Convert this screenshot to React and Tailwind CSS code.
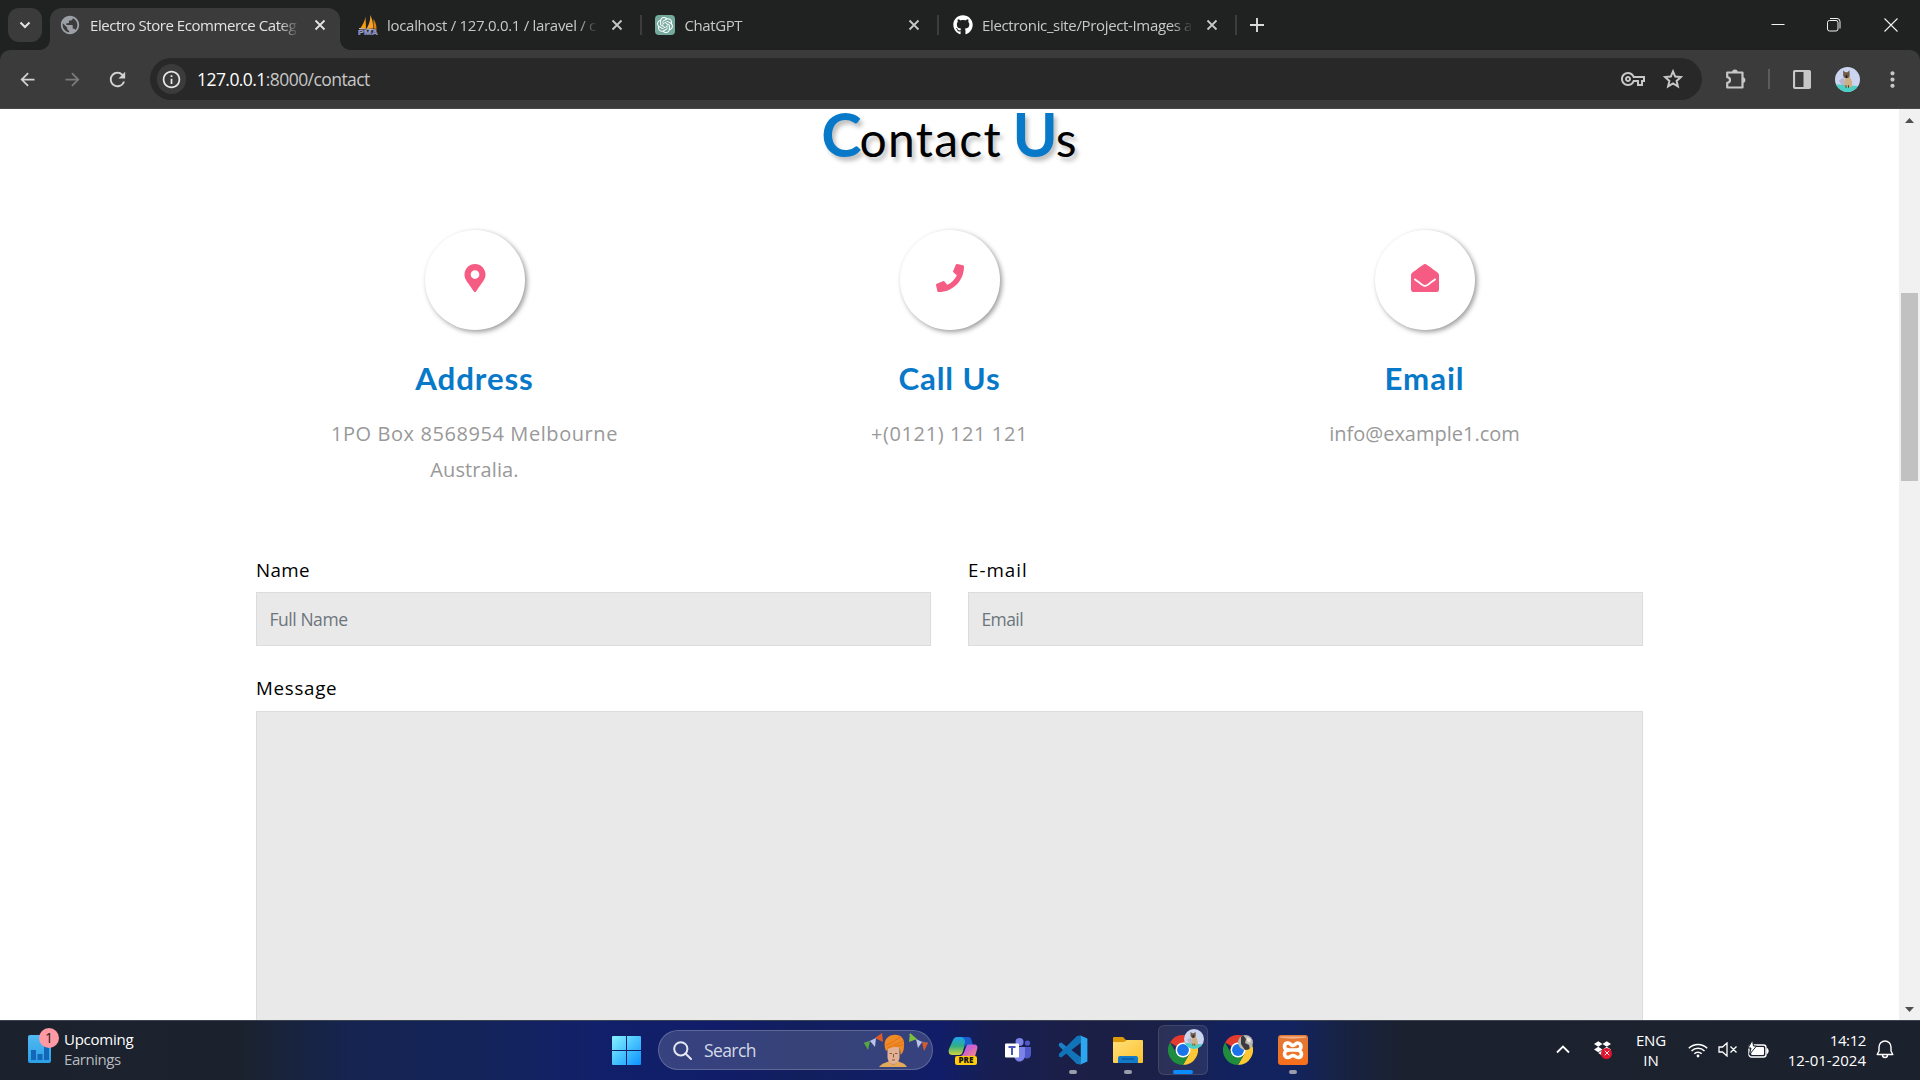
import { FaMapMarkerAlt, FaPhone, FaEnvelopeOpen, FaGithub, FaDropbox } from "react-icons/fa";
import { MdArrowBack, MdArrowForward, MdRefresh, MdInfoOutline, MdOutlineVpnKey, MdMoreVert, MdPublic } from "react-icons/md";
import { SiOpenai } from "react-icons/si";

const segoe = "font-['Open_Sans','Noto_Sans',sans-serif]";
const lato = "font-['Lato',sans-serif]";

function Cross({ className = "" }) {
  return (
    <svg viewBox="0 0 12 12" className={"h-3 w-3 " + className} fill="none" stroke="currentColor" strokeWidth="1.8">
      <path d="M1.5 1.5l9 9M10.5 1.5l-9 9" />
    </svg>
  );
}

function SailLogo() {
  return (
    <svg viewBox="0 0 20 20" className="h-5 w-5">
      <path d="M7.5 1.5C7 6 4 11 1.500 14.500L8 13.500z" fill="#f89c0e" />
      <path d="M12 0C13 5 10.500 10 8.500 14L15 13.500C15.500 8 14 3 12 0z" fill="#f7a32b" />
      <path d="M15.500 4C18 8 18.500 11 18.500 14L15.500 13.500z" fill="#e07f10" />
      <path d="M1 13.500L18.500 15" stroke="#b8bbd8" strokeWidth="1" />
      <text x="0" y="20" fontSize="6.500" fontWeight="700" fill="#6c6fb5" stroke="#c9cbe6" strokeWidth=".25" fontFamily="Liberation Sans" textLength="20" lengthAdjust="spacingAndGlyphs">PMA</text>
    </svg>
  );
}

function CatAvatar({ className }) {
  return (
    <svg viewBox="0 0 26 26" className={"rounded-full " + className}>
      <rect width="26" height="26" fill="#cbd5f0" />
      <path d="M0 18l26 2v6H0z" fill="#49cfc4" />
      <path d="M4 14l5-3 3 8H7z" fill="#a9a3b8" opacity=".6" />
      <path d="M11 9h3.500c3 3 4 8 3 12h-7c-1-4-.5-8 .5-12z" fill="#cdb185" />
      <path d="M8.500 3.500l2 2h2.500l2-2 .3 5c0 2-1.300 3-3.300 3s-3.500-1-3.500-3z" fill="#6e5947" />
      <path d="M11.200 8.500h1.600v3h-1.600z" fill="#221b18" />
      <path d="M11.500 19v2.500M14 19v2.500" stroke="#3b2d24" />
    </svg>
  );
}

function Tab({ icon, title, spacing }) {
  return (
    <div className="flex h-[50px] w-[297.5px] items-center pl-[14px]">
      <div className="flex h-5 w-5 shrink-0 items-center">{icon}</div>
      <div className={"ml-[9px] w-[212px] overflow-hidden whitespace-nowrap text-[15px] leading-5 text-[#c7c9c9] [mask-image:linear-gradient(to_right,#000_91%,transparent_101%)] " + spacing}>{title}</div>
      <Cross className="ml-[14.5px] shrink-0 text-[#c7c9c9]" />
      <div className="ml-[17px] h-5 w-0.5 shrink-0 bg-[#3c3e3e]" />
    </div>
  );
}

function TabStrip() {
  return (
    <div className="flex h-[50px] bg-[#1f2221]">
      <div className="flex w-[50px] shrink-0 pl-2 pt-2">
        <div className="flex h-[34px] w-[34px] items-center justify-center rounded-[11px] bg-[#3b3b3b]">
          <svg viewBox="0 0 12 8" className="h-[8px] w-[12px]" fill="none" stroke="#e3e3e3" strokeWidth="2"><path d="M1.500 1.500L6 6l4.500-4.500" /></svg>
        </div>
      </div>
      <div className="relative mt-2 flex h-[42px] w-[290px] shrink-0 items-center rounded-t-[12px] bg-[#3b3b3b] pb-2 pl-[11px]">
        <span className="absolute -left-[10px] bottom-0 h-[10px] w-[10px] bg-[radial-gradient(circle_at_0_0,transparent_9.500px,#3b3b3b_10px)]" />
        <span className="absolute -right-[10px] bottom-0 h-[10px] w-[10px] bg-[radial-gradient(circle_at_100%_0,transparent_9.500px,#3b3b3b_10px)]" />
        <MdPublic className="-ml-0.5 h-[22px] w-[22px] shrink-0 text-[#9aa0a6]" />
        <div className="ml-[9px] w-[210px] shrink-0 overflow-hidden whitespace-nowrap text-[15px] leading-5 tracking-[-0.45px] text-[#e3e3e3] [mask-image:linear-gradient(to_right,#000_90%,transparent)]">Electro Store Ecommerce Categ</div>
        <Cross className="ml-[14px] text-[#e3e3e3]" />
      </div>
      <div className="ml-1 flex">
        <Tab icon={<SailLogo />} title="localhost / 127.0.0.1 / laravel / c" spacing="tracking-[-0.3px]" />
        <Tab
          icon={<span className="-ml-px flex h-5 w-5 items-center justify-center rounded-[4px] bg-[#74aa9c]"><SiOpenai className="h-4 w-4 text-white" /></span>}
          title="ChatGPT"
          spacing="tracking-[-0.4px]"
        />
        <Tab icon={<FaGithub className="h-5 w-5 text-white" />} title="Electronic_site/Project-Images a" spacing="tracking-[-0.35px]" />
      </div>
      <svg viewBox="0 0 14 14" className="ml-[13.5px] mt-[18px] h-[14px] w-[14px]" stroke="#dadcdc" strokeWidth="1.900"><path d="M7 0v14M0 7h14" /></svg>
      <div className="ml-auto flex h-[50px] items-center pr-[22px] text-[#f2f2f2]">
        <svg viewBox="0 0 14 14" className="h-[14px] w-[14px]" stroke="currentColor" strokeWidth="1"><path d="M.5 6.500h13" /></svg>
        <svg viewBox="0 0 14 14" className="ml-[42px] h-[14px] w-[14px]" fill="none" stroke="currentColor" strokeWidth="1"><rect x=".5" y="2.500" width="10.500" height="10.500" rx="2" /><path d="M3 .5h7a3 3 0 0 1 3 3v7" /></svg>
        <svg viewBox="0 0 14 14" className="ml-[43px] h-[14px] w-[14px]" stroke="currentColor" strokeWidth="1.100"><path d="M.5.5l13 13M13.500.5l-13 13" /></svg>
      </div>
    </div>
  );
}

function StarIcon() {
  return (
    <svg viewBox="0 0 20 20" className="ml-[18px] mr-[2px] h-[20px] w-[20px]" fill="none" stroke="#c7c7c7" strokeWidth="2">
      <path d="M10 2.400L12.200 7.600L17.900 8.100L13.600 11.900L14.900 17.400L10 14.500L5.100 17.400L6.400 11.900L2.100 8.100L7.800 7.600z" />
    </svg>
  );
}

function PuzzleIcon() {
  return (
    <svg viewBox="0 0 22 22" className="ml-[23px] h-[22px] w-[22px]">
      <path d="M2.200 4.500H17.500V19.500H2.200V14.800C4.200 14.500 5 13.400 5 12S4.200 9.500 2.200 9.200z" fill="none" stroke="#c7c7c7" strokeWidth="2.200" strokeLinejoin="round" />
      <path d="M7 4.500a2.900 2.900 0 0 1 5.800 0zM17.500 9.200a2.900 2.900 0 0 1 0 5.800z" fill="#c7c7c7" />
    </svg>
  );
}

function Toolbar() {
  return (
    <div className="bg-[#1f2221]">
      <div className="flex h-[59px] items-center rounded-t-[10px] border-b border-[#4c4848] bg-[#3b3b3b] pl-[17px]">
        <MdArrowBack className="h-[21px] w-[21px] text-[#d2d2d2]" />
        <MdArrowForward className="ml-[24px] h-[21px] w-[21px] text-[#7b7b7b]" />
        <MdRefresh className="ml-[23px] h-[23px] w-[23px] text-[#d2d2d2]" />
        <div className="ml-[21px] flex h-[42px] w-[1552px] items-center rounded-full bg-[#282828] pl-[7px] pr-[17px]">
          <span className="flex h-[30px] w-[29px] items-center justify-center rounded-full bg-[#3b3b3b]"><MdInfoOutline className="h-[21px] w-[21px] text-[#e6e6e6]" /></span>
          <span className="ml-[11px] text-[17.5px] leading-6 tracking-[-0.56px] text-[#c7c7c7]"><span className="text-white">127.0.0.1</span>:8000/contact</span>
          <MdOutlineVpnKey className="ml-auto h-[24px] w-[24px] text-[#c7c7c7]" />
          <StarIcon />
        </div>
        <PuzzleIcon />
        <div className="ml-[21px] h-5 w-0.5 bg-[#5c5c5c]" />
        <svg viewBox="0 0 18 19" className="ml-[23px] h-[19px] w-[18px]"><rect x="1" y="1" width="16" height="17" rx="1.500" fill="none" stroke="#c7c7c7" strokeWidth="2.200" /><path d="M10.500 1H17v17h-6.500z" fill="#c7c7c7" /></svg>
        <CatAvatar className="ml-[24px] h-[25px] w-[25px]" />
        <MdMoreVert className="ml-[20px] h-[25px] w-[25px] text-[#c7c7c7]" />
      </div>
    </div>
  );
}

function InfoCard({ icon, title, children }) {
  return (
    <div className="flex w-[475px] flex-col items-center">
      <div className="flex h-[100px] w-[100px] items-center justify-center rounded-full bg-white pb-[5px] text-[28px] text-[#f65c83] shadow-[2px_2px_5px_rgba(0,0,0,0.4)]">{icon}</div>
      <h4 className={"mt-[29px] text-[31.25px] font-bold leading-[38px] tracking-[0.9px] text-[#0879c9] " + lato}>{title}</h4>
      <div className="mt-[19px] text-center text-[20px] leading-[36px] text-[#999]">{children}</div>
    </div>
  );
}

function Field({ label, placeholder, tracking, labelTracking }) {
  return (
    <div className="w-[675px]">
      <div className={"text-[18.75px] leading-7 text-black " + labelTracking}>{label}</div>
      <div className={"mt-2 flex h-[54px] items-center border border-[#dcdcdc] bg-[#e9e9e9] px-[12.5px] text-[17.5px] text-[#6c757d] " + tracking}>{placeholder}</div>
    </div>
  );
}

function Page() {
  return (
    <div className="flex h-[911px] bg-white">
      <div className="h-[911px] w-[1899px] overflow-hidden">
        <h3 className={"-mt-[12px] h-[82px] text-center text-[48px] leading-[74px] tracking-[1.25px] text-black [text-shadow:3px_4px_4px_rgba(0,0,0,0.25)] [word-spacing:-3px] " + lato}>
          <span className="text-[61px] font-bold tracking-[-2px] text-[#0879c9]">C</span>ontact <span className="text-[61px] font-bold tracking-[-2px] text-[#0879c9]">U</span>s
        </h3>
        <div className="mt-[51px] flex justify-center">
          <InfoCard icon={<FaMapMarkerAlt />} title="Address">
            <p className="tracking-[0.58px]">1PO Box 8568954 Melbourne</p>
            <p className="tracking-[0.1px]">Australia.</p>
          </InfoCard>
          <InfoCard icon={<FaPhone />} title="Call Us"><p className="tracking-[0.6px]">+(0121) 121 121</p></InfoCard>
          <InfoCard icon={<FaEnvelopeOpen />} title="Email"><p className="tracking-[0px]">info@example1.com</p></InfoCard>
        </div>
        <div className="mx-auto mt-[68px] w-[1387px]">
          <div className="flex justify-between">
            <Field label="Name" placeholder="Full Name" labelTracking="tracking-[0.4px]" tracking="tracking-[-0.45px]" />
            <Field label="E-mail" placeholder="Email" labelTracking="tracking-[1px]" tracking="tracking-[-0.6px]" />
          </div>
          <div className="mt-[28px] text-[18.75px] leading-7 tracking-[0.7px] text-black">Message</div>
          <div className="mt-[9px] h-[380px] border border-[#dcdcdc] bg-[#e9e9e9]" />
        </div>
      </div>
      <div className="flex h-[911px] w-[21px] flex-col items-center bg-[#f1f1f1]">
        <svg viewBox="0 0 9 5" className="mt-[9px] h-[5px] w-[9px]"><path d="M0 5L4.500 0 9 5z" fill="#505050" /></svg>
        <div className="mt-[170px] h-[188px] w-[17px] bg-[#c1c1c1]" />
        <svg viewBox="0 0 9 5" className="mb-[8px] mt-auto h-[5px] w-[9px]"><path d="M0 0L4.500 5 9 0z" fill="#505050" /></svg>
      </div>
    </div>
  );
}

function FestiveFigure() {
  return (
    <svg viewBox="0 0 64 34" className="h-[34px] w-[64px]">
      <path d="M0 10C8 8 14 5 18 1M45 1c4 5 10 8 19 9" stroke="#8c93b8" strokeWidth=".6" fill="none" />
      <path d="M0 10l6-2-2 9z" fill="#55a83a" /><path d="M6 8l6-3-1 9z" fill="#b9c4ea" /><path d="M11 5l7-5 1 9z" fill="#dd5a28" />
      <path d="M46 0l7 6-8 3z" fill="#7cbf3a" /><path d="M52 6l6 3-4 6z" fill="#b9c4ea" /><path d="M58 9l6 1-4 8z" fill="#dd5a28" />
      <path d="M15 34c3-4 7-4 10-6l4 3 5-3c3 2 7 2 9 6z" fill="#e3a95a" />
      <path d="M26 27h7v3l-3.500 2.500L26 30z" fill="#c98d6c" />
      <path d="M23.500 14h12v10c0 4-3 7-6 7s-6-3-6-7z" fill="#e2b194" />
      <path d="M25.500 20.500h2.500M31 20.500h2.500M28 27h3M29.500 21v3.500" stroke="#7a4d3a" strokeWidth=".9" />
      <path d="M22 18C18.500 9 22 3 29 2c8-1 12 4 11 11 0 4-1 7-3.500 9 0-4-.5-6-1.500-7.500C31 13.500 26 14 22 18z" fill="#f08a24" />
      <path d="M22 12c5-1 8-4 14-8M23 15c5-2 10-4 16-7M31 13.500c4-1 5-1 9-2" stroke="#d96f18" strokeWidth=".8" fill="none" />
    </svg>
  );
}

function Chrome({ children }) {
  return (
    <span className="relative block h-[30px] w-[30px]">
      <svg viewBox="0 0 48 48" className="h-[30px] w-[30px]">
        <path d="M24 24L3.200 12A24 24 0 0 1 44.800 12z" fill="#e33b2e" />
        <path d="M24 12h20.800A24 24 0 0 1 24 48l10.400-18z" fill="#fcc934" />
        <path d="M34.400 30L24 48A24 24 0 0 1 3.200 12l10.400 18z" fill="#1e8e3e" />
        <circle cx="24" cy="24" r="12" fill="#fff" /><circle cx="24" cy="24" r="9.500" fill="#1a73e8" />
      </svg>
      {children}
    </span>
  );
}

function Slot({ children, dot, active }) {
  return (
    <div className="flex h-[59px] w-[55px] justify-center">
      <div className={"mt-[4px] flex h-[50px] w-[50px] flex-col items-center rounded-[6px] border pt-[9px] " + (active ? "border-white/10 bg-white/[0.08]" : "border-transparent")}>
        <div className="flex h-[30px] items-center">{children}</div>
        {dot && <div className={active ? "mt-[5px] h-1 w-5 shrink-0 rounded-full bg-[#0a8cff]" : "mt-[5px] h-1 w-2 shrink-0 rounded-full bg-[#9a9dab]"} />}
      </div>
    </div>
  );
}

function Copilot() {
  return (
    <svg viewBox="0 0 30 30" className="h-[30px] w-[30px]">
      <defs>
        <linearGradient id="ca" x1="0" y1="0" x2="0" y2="1"><stop offset="0" stopColor="#1fa3f0" /><stop offset=".5" stopColor="#2fae86" /><stop offset="1" stopColor="#d5d43a" /></linearGradient>
        <linearGradient id="cb" x1="0" y1="0" x2="1" y2="1"><stop offset="0" stopColor="#9a6df0" /><stop offset=".5" stopColor="#d263c9" /><stop offset="1" stopColor="#f7936b" /></linearGradient>
      </defs>
      <path d="M9 2h10l-4 14c-1 3-2 4-4 4H4c-3 0-4-3-3-6L5 5c1-2 2-3 4-3z" fill="url(#ca)" />
      <path d="M12 2h8c2 0 3 1 3.500 3l1.500 5h-5c-2 0-3 1-4 3l1-6c0-3-2-5-5-5z" fill="#1a5fd0" />
      <path d="M21 9.500h5c3 0 4 2 3 5l-2 7H12c2-1 3-2 4-4l2-5.500c.5-1.700 1.500-2.500 3-2.500z" fill="url(#cb)" />
      <rect x="7" y="21" width="22" height="9" rx="2" fill="#ffcb0c" />
      <text x="18" y="28.400" textAnchor="middle" fontSize="8" fontWeight="800" fontFamily="Open Sans" fill="#151515">PRE</text>
    </svg>
  );
}

function Teams() {
  return (
    <svg viewBox="0 0 27 24" className="h-[24px] w-[27px]">
      <circle cx="22.500" cy="5" r="2.600" fill="#5059c9" /><circle cx="14.500" cy="4" r="4" fill="#7b83eb" />
      <path d="M18 9h8v7c0 3-2 4.500-4 4.500S18 19 18 17z" fill="#5059c9" />
      <path d="M9 9h11v8c0 4-2.500 6.500-5.500 6.500S9 21 9 17z" fill="#7b83eb" />
      <rect y="5.500" width="14" height="14" rx="1" fill="#fff" />
      <path d="M3.500 9h7M7 9v8" stroke="#4b53bc" strokeWidth="2" />
    </svg>
  );
}

function Xampp() {
  return (
    <svg viewBox="0 0 30 30" className="h-[30px] w-[30px]">
      <defs><linearGradient id="xp" x1="0" y1="0" x2="0" y2="1"><stop offset="0" stopColor="#e07a38" /><stop offset="1" stopColor="#f76f1c" /></linearGradient></defs>
      <rect width="30" height="30" rx="3" fill="url(#xp)" />
      <path d="M2 2.500c8 1.500 18 1.500 26 0V1.500H2z" fill="#f3b189" />
      <path d="M11.500 15H18M11.500 15C8 15 6.500 17 6.500 19S8 22.500 10 22.500 13 20.500 15 20.500 17.500 22.500 20 22.500 23.500 21 23.500 19 21.500 15 18 15C21.500 15 23 13.500 23 11.500S21.500 8 19.500 8 17 10.500 15 10.500 12.500 8 10 8 6.500 9.500 6.500 11.500 8 15 11.500 15z" fill="none" stroke="#fff" strokeWidth="3.600" strokeLinejoin="round" />
    </svg>
  );
}

function Taskbar() {
  return (
    <div className="flex h-[60px] border-t border-[#3b4450] bg-[linear-gradient(90deg,#1c222d_0px,#1b222e_240px,#152450_350px,#14245a_480px,#11206a_600px,#111d68_720px,#121f5e_800px,#111d68_940px,#171f52_990px,#1c1f45_1090px,#1a2048_1160px,#12225f_1230px,#122460_1290px,#182240_1350px,#1b212e_1410px,#1c222d_1920px)] text-white">
      <div className="flex w-[599px] shrink-0 pl-7">
        <div className="relative mt-[14px] h-7 w-6">
          <svg viewBox="0 0 24 28" className="h-7 w-6">
            <defs><linearGradient id="nw" x1="0" y1="0" x2="0" y2="1"><stop offset="0" stopColor="#52b9f2" /><stop offset="1" stopColor="#2ba0e6" /></linearGradient></defs>
            <rect width="23" height="28" rx="2" fill="url(#nw)" /><path d="M3 15h5v10H3zM9.500 19h5v6h-5zM16 11h5v14h-5z" fill="#1267b8" />
          </svg>
          <span className="absolute -top-[7px] left-[11px] flex h-5 w-5 items-center justify-center rounded-full bg-[#ff99a4] text-[14px] leading-none text-[#1b1b1b]">1</span>
        </div>
        <div className="ml-3 mt-[8px] text-[15px] leading-5">
          <div className="tracking-[-0.25px]">Upcoming</div>
          <div className="tracking-[-0.45px] text-[#b9bbc0]">Earnings</div>
        </div>
      </div>
      <div className="flex w-[55px] shrink-0 justify-center pt-[15px]">
        <svg viewBox="0 0 29 29" className="h-[29px] w-[29px]">
          <defs><linearGradient id="wn" x1="0" y1="0" x2="1" y2="1"><stop offset="0" stopColor="#86f2ff" /><stop offset="1" stopColor="#0a93ff" /></linearGradient></defs>
          <path d="M0 1a1 1 0 0 1 1-1h13v14H0zM15 0h13a1 1 0 0 1 1 1v13H15zM0 15h14v14H1a1 1 0 0 1-1-1zM15 15h14v13a1 1 0 0 1-1 1H15z" fill="url(#wn)" />
        </svg>
      </div>
      <div className="ml-[4px] mt-[9px] flex h-10 w-[275px] shrink-0 items-center rounded-full border border-white/20 bg-[#7b86a8]/35 pl-[14px] pr-1">
        <svg viewBox="0 0 19 19" className="h-[19px] w-[19px]" fill="none" stroke="#e4e7f0" strokeWidth="2"><circle cx="7.800" cy="7.800" r="6.600" /><path d="M12.500 12.500l5.500 5.500" strokeLinecap="round" /></svg>
        <span className="ml-3 text-[17.5px] leading-6 tracking-[-0.6px] text-[#d5d9e4]">Search</span>
        <span className="ml-auto"><FestiveFigure /></span>
      </div>
      <div className="ml-[2.500px] flex">
        <Slot><Copilot /></Slot>
        <Slot><Teams /></Slot>
        <Slot dot>
          <svg viewBox="0 0 100 100" className="h-[30px] w-[30px]">
            <path d="M71 0L29 39 11 25 3 28v9l60 60 12-1z" fill="#1b7fc4" /><path d="M71 100L29 61 11 75l-8-3v-9L63 3l12 1z" fill="#1173b8" />
            <path d="M71 0l27 12v76l-27 12c2-1 4-3 4-6V6c0-3-2-5-4-6z" fill="#2ca6ee" /><path d="M75 27L45 50l30 23z" fill="#171f4a" />
          </svg>
        </Slot>
        <Slot dot>
          <svg viewBox="0 0 30 28" className="h-[28px] w-[30px]">
            <defs><linearGradient id="fd" x1="0" y1="0" x2="1" y2="1"><stop offset="0" stopColor="#ffe07a" /><stop offset="1" stopColor="#fbc12c" /></linearGradient></defs>
            <path d="M0 2a1 1 0 0 1 1-1h9l3 3h16v8H0z" fill="#dc9a08" /><path d="M0 6h11l3-2h15a1 1 0 0 1 1 1v21a1 1 0 0 1-1 1H1a1 1 0 0 1-1-1z" fill="url(#fd)" />
            <path d="M5 27v-5a2 2 0 0 1 2-2h16a2 2 0 0 1 2 2v5z" fill="#117acb" /><path d="M9 23h12" stroke="#0a4f94" strokeWidth="1.200" />
          </svg>
        </Slot>
        <Slot dot active><Chrome><CatAvatar className="absolute -top-[6px] left-[16px] h-5 w-5" /></Chrome></Slot>
        <Slot>
          <Chrome>
            <svg viewBox="0 0 15 15" className="absolute left-[15px] top-0 h-[15px] w-[15px] rounded-full"><rect width="15" height="15" fill="#b9b7b2" /><path d="M5 0l3 4-1 4 4 2 1 5H7L3 9V2z" fill="#3c3a3c" /><path d="M9 2l4 2-1 4-3-2z" fill="#e8e4de" /></svg>
          </Chrome>
        </Slot>
        <Slot dot><Xampp /></Slot>
      </div>
      <div className="ml-auto flex h-[57px] items-center">
        <svg viewBox="0 0 14 9" className="h-[9px] w-[14px]" fill="none" stroke="#fff" strokeWidth="1.800"><path d="M1 7.500L7 1.500l6 6" /></svg>
        <span className="relative ml-[24px] h-5 w-5">
          <FaDropbox className="h-[17px] w-[17px] text-white" />
          <span className="absolute left-[7px] top-[8px] flex h-[11px] w-[11px] items-center justify-center rounded-full bg-[#e0142e]"><Cross className="h-[6px]! w-[6px]!" /></span>
        </span>
        <div className="ml-[21px] w-[32px] text-center text-[15px] leading-5 tracking-[-0.1px]"><div>ENG</div><div>IN</div></div>
        <svg viewBox="0 0 20 16" className="ml-[21px] h-[16px] w-[20px]" fill="none" stroke="#fff" strokeWidth="1.500"><path d="M.8 6.300a13 13 0 0 1 18.400 0M3.500 9a9.200 9.200 0 0 1 13 0M6.300 11.700a5.200 5.200 0 0 1 7.400 0" /><circle cx="10" cy="14" r="1.400" fill="#fff" stroke="none" /></svg>
        <svg viewBox="0 0 20 15" className="ml-[10px] h-[15px] w-[20px]" fill="none" stroke="#fff" strokeWidth="1.300"><path d="M1 5h3.500L9 1v13l-4.500-4H1zM12.500 4.500l6 6M18.500 4.500l-6 6" /></svg>
        <svg viewBox="0 0 21 17" className="ml-[10px] h-[17px] w-[21px]"><rect x="1" y="4" width="17" height="12" rx="2.500" fill="none" stroke="#fff" strokeWidth="1.400" /><rect x="3.200" y="6" width="12.800" height="8" rx="1" fill="#fff" /><path d="M19 7.500c1.500 0 1.500 5 0 5z" fill="#fff" stroke="#fff" /><path d="M4.500-1L0 7h3L1.500 13.500l7-8.500h-3z" fill="#fff" stroke="#1c222d" strokeWidth="1" /></svg>
        <div className="ml-[17px] w-[80px] text-right text-[15px] leading-5"><div className="tracking-[-0.4px]">14:12</div><div>12-01-2024</div></div>
        <svg viewBox="0 0 18 19" className="ml-[10px] mr-[26px] h-[19px] w-[18px]" fill="none" stroke="#fff" strokeWidth="1.400"><path d="M9 1a6 6 0 0 0-6 6v4l-1.800 3.500h15.600L15 11V7a6 6 0 0 0-6-6zM6.500 15a2.500 2.500 0 0 0 5 0" strokeLinejoin="round" /></svg>
      </div>
    </div>
  );
}

export default function App() {
  return (
    <div className={"h-[1080px] w-[1920px] overflow-hidden " + segoe}>
      <TabStrip />
      <Toolbar />
      <Page />
      <Taskbar />
    </div>
  );
}
